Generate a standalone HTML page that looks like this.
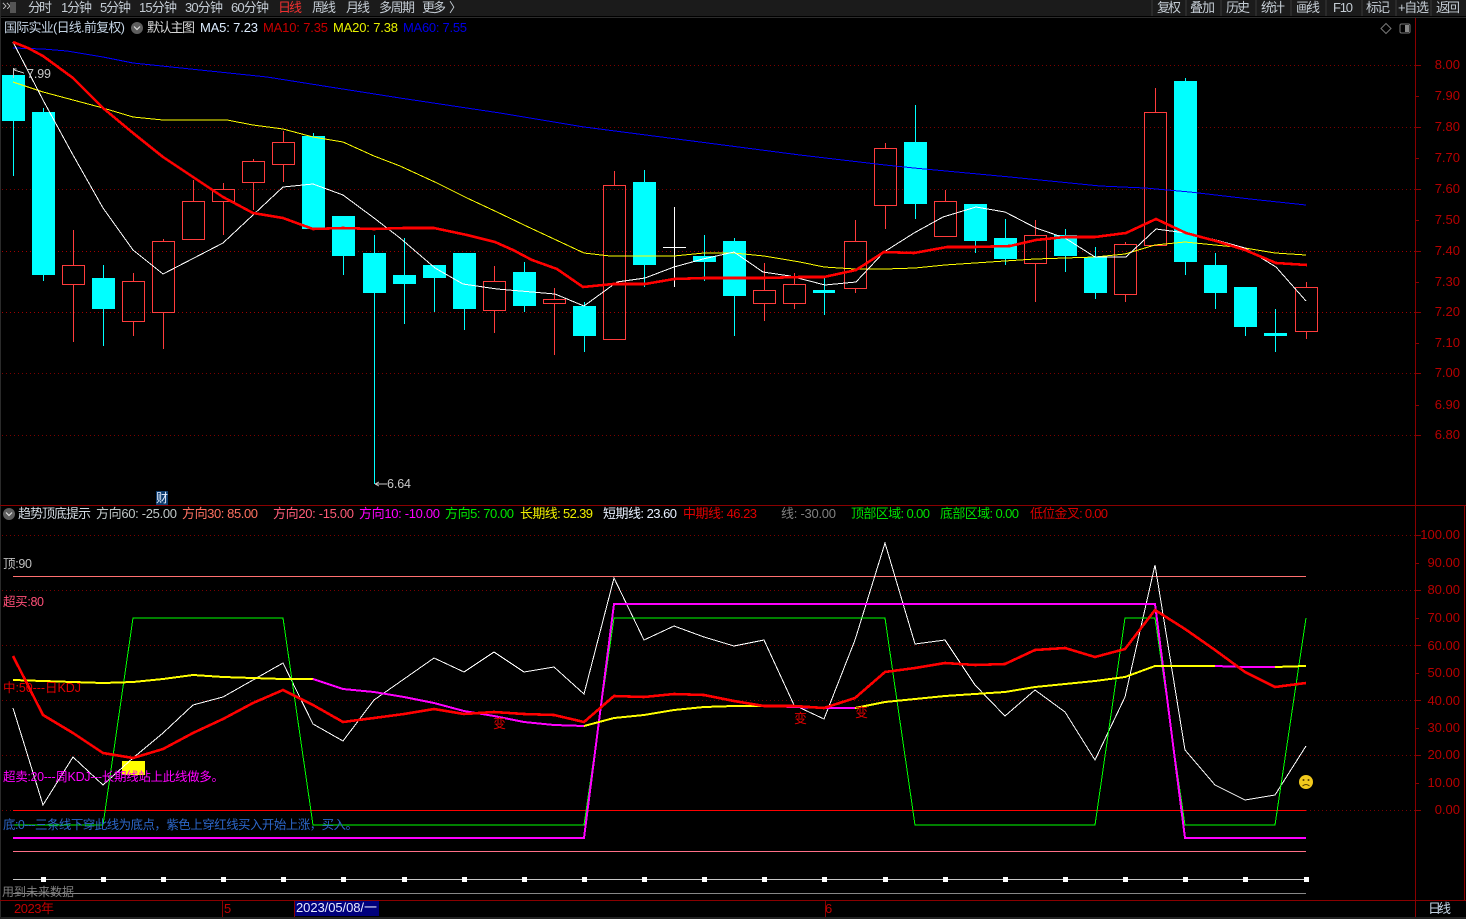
<!DOCTYPE html>
<html><head><meta charset="utf-8"><title>K线</title>
<style>
html,body{margin:0;padding:0;background:#000;width:1466px;height:919px;overflow:hidden}
svg{display:block}
text{font-family:"Liberation Sans","Noto Sans CJK SC",sans-serif;font-size:13px;white-space:pre}
.t{fill:#c4ccd4;font-size:12.5px}
.ax{fill:#b80000;text-anchor:end;font-size:13px}
.g{stroke:#7a0000;stroke-width:1;stroke-dasharray:1 3;fill:none}
polyline,.c{shape-rendering:crispEdges;fill:none}
</style></head><body>
<svg width="1466" height="919" viewBox="0 0 1466 919" xmlns="http://www.w3.org/2000/svg">
<rect width="1466" height="919" fill="#000"/>
<!-- top bar -->
<rect width="1466" height="16" fill="#1b1b1b"/>
<rect y="17" width="1466" height="1" fill="#2c2c2c"/>
<path class="c" d="M3 3l3 3-3 3M7 3l3 3-3 3" stroke="#aaa"/>
<rect x="10" y="2" width="6" height="11" fill="#555"/>
<g class="t">
<text x="28" y="12" textLength="24">分时</text>
<text x="61" y="12" textLength="31">1分钟</text>
<text x="100" y="12" textLength="31">5分钟</text>
<text x="139" y="12" textLength="38">15分钟</text>
<text x="185" y="12" textLength="38">30分钟</text>
<text x="231" y="12" textLength="38">60分钟</text>
<text x="278" y="12" textLength="24" style="fill:#f03030">日线</text>
<text x="312" y="12" textLength="24">周线</text>
<text x="346" y="12" textLength="24">月线</text>
<text x="379" y="12" textLength="36">多周期</text>
<text x="422" y="12" textLength="24">更多</text>
<text x="449" y="12">〉</text>
<text x="1157" y="12" textLength="24">复权</text>
<text x="1190" y="12" textLength="25">叠加</text>
<text x="1226" y="12" textLength="24">历史</text>
<text x="1261" y="12" textLength="24">统计</text>
<text x="1296" y="12" textLength="24">画线</text>
<text x="1333" y="12" textLength="20">F10</text>
<text x="1366" y="12" textLength="24">标记</text>
<text x="1398" y="12" textLength="31">+自选</text>
<text x="1436" y="12" textLength="24">返回</text>
</g>
<path class="c" stroke="#3a3a3a" d="M1152 0V16M1186 0V16M1221 0V16M1256 0V16M1291 0V16M1326 0V16M1362 0V16M1396 0V16M1431 0V16"/>

<!-- grids -->
<g class="g">
<path d="M2 65.5H1415M2 127.5H1415M2 189.5H1415M2 373.5H1415M2 435.5H1415M2 535.5H1415M2 590.5H1415M2 645.5H1415M2 700.5H1415M2 755.5H1415M2 810.5H1415"/>
<path stroke="#a00000" d="M2 251.5H1415M2 312.5H1415"/>
</g>

<!-- frame -->
<rect x="0" y="0" width="1" height="919" fill="#2a2a2a"/>
<path class="c" stroke="#8a0000" d="M1415.5 18V900M1464.5 505V900M0 505.5H1466M0 900.5H1466M1415.5 900V917M222.5 900V917M825.5 900V917M294.5 900V917"/>
<rect y="917" width="1466" height="2" fill="#222"/>
<!-- axis ticks -->
<path class="c" stroke="#8a0000" d="M1416 65.5h5M1416 96.5h3M1416 127.5h5M1416 158.5h3M1416 189.5h5M1416 220.5h3M1416 251.5h5M1416 282.5h3M1416 312.5h5M1416 343.5h3M1416 373.5h5M1416 405.5h3M1416 435.5h5M1416 535.5h5M1416 563.5h3M1416 590.5h5M1416 618.5h3M1416 645.5h5M1416 673.5h3M1416 700.5h5M1416 728.5h3M1416 755.5h5M1416 783.5h3M1416 810.5h5"/>
<g class="ax">
<text x="1460" y="69">8.00</text><text x="1460" y="100">7.90</text><text x="1460" y="131">7.80</text><text x="1460" y="162">7.70</text><text x="1460" y="193">7.60</text><text x="1460" y="224">7.50</text><text x="1460" y="255">7.40</text><text x="1460" y="286">7.30</text><text x="1460" y="316">7.20</text><text x="1460" y="347">7.10</text><text x="1460" y="377">7.00</text><text x="1460" y="409">6.90</text><text x="1460" y="439">6.80</text>
<text x="1460" y="539">100.00</text><text x="1460" y="567">90.00</text><text x="1460" y="594">80.00</text><text x="1460" y="622">70.00</text><text x="1460" y="650">60.00</text><text x="1460" y="677">50.00</text><text x="1460" y="705">40.00</text><text x="1460" y="732">30.00</text><text x="1460" y="759">20.00</text><text x="1460" y="787">10.00</text><text x="1460" y="814">0.00</text>
</g>

<!-- candle wicks & bodies: cyan -->
<path class="c" stroke="#00ffff" d="M13.5 68V176M43.5 108V281M103.5 265V346M313.5 133V229M343.5 216V275M374.5 235V484M404.5 238V324M434.5 265V312M464.5 253V330M524.5 262V312M584.5 302V352M644.5 170V287M704.5 235V281M734.5 238V336M824.5 278V315M915.5 105V219M975.5 204V253M1005.5 219V265M1065.5 229V272M1095.5 247V299M1185.5 78V275M1215.5 253V309M1245.5 287V336M1275.5 309V352"/>
<path class="c" style="fill:#00ffff" d="M2 75h23v46h-23zM32 112h23v163h-23zM92 278h23v31h-23zM302 136h23v93h-23zM332 216h23v40h-23zM363 253h23v40h-23zM393 275h23v9h-23zM423 265h23v13h-23zM453 253h23v56h-23zM513 272h23v34h-23zM573 306h23v30h-23zM633 182h23v83h-23zM693 256h23v6h-23zM723 241h23v55h-23zM813 290h22v3h-22zM904 142h23v62h-23zM964 204h23v37h-23zM994 238h23v21h-23zM1054 235h23v21h-23zM1084 257h23v36h-23zM1174 81h23v181h-23zM1204 265h23v28h-23zM1234 287h23v40h-23zM1264 333h23v3h-23z"/>
<!-- red -->
<path class="c" stroke="#ff3c3c" d="M73.5 230V265M73.5 284V342M133.5 273V281M133.5 322V336M163.5 239V241M163.5 313V349M193.5 180V201M223.5 183V189M223.5 202V235M253.5 159V161M253.5 182V210M283.5 131V142M283.5 165V182M494.5 266V281M494.5 310V333M554.5 288V299M554.5 303V355M614.5 171V185M764.5 263V290M764.5 303V321M794.5 273V284M794.5 303V309M855.5 220V241M855.5 288V293M885.5 143V148M885.5 205V229M945.5 190V201M1035.5 220V235M1035.5 263V302M1125.5 242V244M1125.5 294V302M1155.5 88V112M1306.5 282V287M1306.5 331V339"/>
<path class="c" stroke="#ff3c3c" d="M62.5 265.5h22v19h-22zM122.5 281.5h22v40h-22zM152.5 241.5h22v71h-22zM182.5 201.5h22v38h-22zM212.5 189.5h22v12h-22zM242.5 161.5h22v21h-22zM272.5 142.5h22v22h-22zM483.5 281.5h22v29h-22zM543.5 299.5h22v4h-22zM603.5 185.5h22v154h-22zM753.5 290.5h22v13h-22zM783.5 284.5h22v19h-22zM844.5 241.5h22v47h-22zM874.5 148.5h22v57h-22zM934.5 201.5h22v35h-22zM1024.5 235.5h22v28h-22zM1114.5 244.5h22v50h-22zM1144.5 112.5h22v133h-22zM1295.5 287.5h22v44h-22z"/>
<path class="c" stroke="#fff" d="M674.5 207V287M663 247.5H686"/>

<!-- MAs -->
<polyline stroke="#0000ff" stroke-width="1" points="13,48 43,49 67,51 103,57 133,63 200,70 267,77 330,87 400,98 500,113 584,127 700,142 800,155 885,165 914,168 1010,177 1100,186 1145,188 1190,192 1250,199 1306,205"/>
<polyline stroke="#ffff00" points="13,82 43,92 73,100 103,108 133,117 163,120 193,120 227,120 253,125 283,129 313,137 343,142 374,156 400,166 437,183 467,198 497,212 524,225 554,239 584,253 610,256 644,256 674,256 704,253 734,253 764,256 800,262 824,267 855,269 885,269 915,268 945,265 975,263 1005,261 1035,259 1065,258 1095,257 1125,254 1155,245 1185,242 1215,245 1245,248 1275,253 1306,255"/>
<polyline stroke="#ffffff" points="13,42 43,100 73,155 103,208 133,250 163,274 223,243 253,215 283,187 313,184 343,195 374,218 400,238 435,268 463,284 497,289 532,292 555,294 584,306 617,282 645,278 674,267 703,259 734,252 763,272 790,276 825,285 856,282 884,252 914,233 943,217 976,207 1005,212 1036,228 1065,238 1095,257 1126,257 1156,229 1186,233 1216,240 1245,248 1276,267 1306,301"/>
<polyline stroke="#ff0000" stroke-width="2.6" points="13,42 28,48 43,56 73,78 103,108 133,133 163,157 193,177 223,197 253,213 283,218 313,229 343,228 374,229 404,228 434,228 467,235 495,242 513,250 532,260 557,269 583,287 613,284 645,284 674,279 704,278 734,278 764,278 800,277 824,277 856,270 884,252 914,253 947,247 975,247 1010,246 1036,240 1065,237 1095,237 1126,233 1156,219 1186,233 1216,241 1245,250 1276,263 1307,265"/>

<!-- main annotations -->
<path class="c" stroke="#c8c8c8" d="M13.5 68V78M13.5 69h3M14 70l10 3M375 484h12M375 484l4-2M375 484l4 2"/>
<text x="27" y="78" textLength="24" style="fill:#c8c8c8;font-size:12.5px">7.99</text>
<text x="387" y="488" textLength="24" style="fill:#c8c8c8;font-size:12.5px">6.64</text>

<!-- header 2 -->
<text x="4" y="32" textLength="121" style="fill:#c4d4e4">国际实业(日线.前复权)</text>
<circle cx="137" cy="28" r="6" fill="#5e5e5e"/><path d="M134 26.5l3 3 3-3" stroke="#ddd" stroke-width="1.2" fill="none"/>
<text x="147" y="32" textLength="48" style="fill:#d8d8d8">默认主图</text>
<text x="200" y="32" textLength="58" style="fill:#dcecff">MA5: 7.23</text>
<text x="263" y="32" textLength="65" style="fill:#c80000">MA10: 7.35</text>
<text x="333" y="32" textLength="65" style="fill:#e8f000">MA20: 7.38</text>
<text x="403" y="32" textLength="64" style="fill:#0000e8">MA60: 7.55</text>
<path d="M1386 23.5l5 5-5 5-5-5z" stroke="#777" fill="none"/>
<rect x="1400" y="24" width="10" height="9" rx="1.5" stroke="#777" fill="none"/><rect x="1405" y="25" width="4" height="7" fill="#888"/>

<!-- cai marker -->
<rect x="156" y="491" width="12" height="14" fill="#0d3c6e"/>
<text x="156" y="502" style="fill:#e8f0ff;font-size:12px">财</text>

<!-- legend -->
<circle cx="9" cy="514" r="6" fill="#5e5e5e"/><path d="M6 512.5l3 3 3-3" stroke="#ddd" stroke-width="1.2" fill="none"/>
<text x="18" y="518" textLength="73" style="fill:#d0d8e0">趋势顶底提示</text>
<text x="96" y="518" textLength="81" style="fill:#c0c8c8">方向60: -25.00</text>
<text x="182" y="518" textLength="76" style="fill:#ff7060">方向30: 85.00</text>
<text x="273" y="518" textLength="81" style="fill:#ff5c78">方向20: -15.00</text>
<text x="359" y="518" textLength="81" style="fill:#ff00ff">方向10: -10.00</text>
<text x="445" y="518" textLength="69" style="fill:#00e800">方向5: 70.00</text>
<text x="520" y="518" textLength="73" style="fill:#f0f000">长期线: 52.39</text>
<text x="603" y="518" textLength="74" style="fill:#e8f0ff">短期线: 23.60</text>
<text x="683" y="518" textLength="74" style="fill:#e00000">中期线: 46.23</text>
<text x="781" y="518" textLength="55" style="fill:#808080">线: -30.00</text>
<text x="851" y="518" textLength="79" style="fill:#00e000">顶部区域: 0.00</text>
<text x="940" y="518" textLength="79" style="fill:#00e000">底部区域: 0.00</text>
<text x="1030" y="518" textLength="78" style="fill:#d80000">低位金叉: 0.00</text>

<!-- oscillator horizontals -->
<path class="c" stroke="#ff7070" d="M13 576.5H1306"/>
<path class="c" stroke="#ff0000" d="M13 810.5H1306"/>
<path class="c" stroke="#ff7088" d="M13 851.5H1306"/>
<path class="c" stroke="#c8c8c8" d="M13 879.5H1306"/>
<path class="c" stroke="#888" d="M13 893.5H1306"/>
<path class="c" style="fill:#fff" d="M41 877h5v5h-5zM101 877h5v5h-5zM161 877h5v5h-5zM221 877h5v5h-5zM281 877h5v5h-5zM341 877h5v5h-5zM402 877h5v5h-5zM462 877h5v5h-5zM522 877h5v5h-5zM582 877h5v5h-5zM642 877h5v5h-5zM702 877h5v5h-5zM762 877h5v5h-5zM822 877h5v5h-5zM883 877h5v5h-5zM943 877h5v5h-5zM1003 877h5v5h-5zM1063 877h5v5h-5zM1123 877h5v5h-5zM1183 877h5v5h-5zM1243 877h5v5h-5zM1304 877h5v5h-5z"/>

<rect x="122" y="761" width="23" height="14" fill="#ffff00"/>

<!-- oscillator curves -->
<polyline stroke="#ffffff" points="13,708 43,805 73,757 103,785 133,758 163,733 193,705 223,697 253,680 283,663 313,724 343,741 374,700 404,679 434,658 464,672 494,652 524,672 554,667 584,694 614,578 644,640 674,626 704,637 734,646 764,640 794,705 824,719 855,640 885,543 915,644 945,640 975,685 1005,716 1035,690 1065,712 1095,760 1125,697 1155,565 1185,750 1215,785 1245,800 1275,795 1306,746"/>
<polyline stroke="#00ff00" points="13,825 103,825 133,618 283,618 313,825 584,825 614,618 885,618 915,825 1095,825 1125,618 1155,618 1185,825 1275,825 1306,618"/>
<polyline stroke="#ff00ff" stroke-width="2" points="13,838 584,838 614,604 1155,604 1185,838 1306,838"/>
<polyline stroke="#ffff00" stroke-width="2" points="13,680 43,681 73,682 103,683 133,682 163,679 193,675 223,677 253,678 283,679 313,679"/>
<polyline stroke="#ff00ff" stroke-width="2" points="313,679 343,689 374,692 404,697 434,703 464,711 494,716 524,722 554,725 584,726"/>
<polyline stroke="#ffff00" stroke-width="2" points="584,726 614,718 644,715 674,710 704,707 734,706 764,706"/>
<polyline stroke="#ff00ff" stroke-width="2" points="764,706 794,707 824,708 855,708"/>
<polyline stroke="#ffff00" stroke-width="2" points="855,708 885,702 915,699 945,696 975,694 1005,692 1035,687 1065,684 1095,681 1125,677 1155,666 1185,666 1215,666"/>
<polyline stroke="#ff00ff" stroke-width="2" points="1215,666 1245,667 1275,667"/>
<polyline stroke="#ffff00" stroke-width="2" points="1275,667 1306,666"/>
<polyline stroke="#ff0000" stroke-width="2.6" points="13,656 43,715 73,733 103,753 133,758 163,749 193,733 223,719 253,703 283,690 313,705 343,722 374,718 404,714 434,709 464,714 494,712 524,714 554,715 584,722 614,696 644,697 674,694 704,695 734,701 764,706 794,706 824,708 855,698 885,672 915,668 945,663 975,665 1005,664 1035,650 1065,648 1095,657 1125,649 1155,610 1185,629 1215,650 1245,672 1275,687 1306,683"/>

<!-- change markers -->
<g style="fill:#e00000;font-size:11px"><text x="493" y="728">变</text><text x="794" y="723">变</text><text x="855" y="717">变</text></g>

<!-- left labels -->
<text x="3" y="568" textLength="29" style="fill:#c0c0c0;font-size:12.5px">顶:90</text>
<text x="3" y="606" textLength="41" style="fill:#ff5078;font-size:12.5px">超买:80</text>
<text x="3" y="692" textLength="78" style="fill:#e00000;font-size:12.5px">中:50---日KDJ</text>
<text x="3" y="781" textLength="221" style="fill:#ff00ff;font-size:12.5px">超卖:20---周KDJ---长期线站上此线做多。</text>
<text x="3" y="829" textLength="355" style="fill:#2c66c8;font-size:12.5px">底:0---三条线下穿此线为底点，紫色上穿红线买入开始上涨，买入。</text>
<text x="2" y="896" textLength="72" style="fill:#808080;font-size:12px">用到未来数据</text>

<!-- sad face -->
<circle cx="1306" cy="782" r="7" fill="#f2c91c"/>
<circle cx="1303.5" cy="780" r="1" fill="#5a4000"/><circle cx="1308.5" cy="780" r="1" fill="#5a4000"/>
<path d="M1302.5 786q3.5-3 7 0" stroke="#5a4000" fill="none"/>

<!-- time axis -->
<text x="14" y="913" textLength="40" style="fill:#c00000">2023年</text>
<text x="224" y="913" style="fill:#c00000">5</text>
<rect x="295" y="901" width="84" height="15" fill="#00007c"/>
<text x="296" y="912" textLength="81" style="fill:#e8ecff">2023/05/08/一</text>
<text x="825" y="913" style="fill:#c00000">6</text>
<text x="1428" y="913" textLength="23" style="fill:#c4d4e4">日线</text>
</svg>
</body></html>
